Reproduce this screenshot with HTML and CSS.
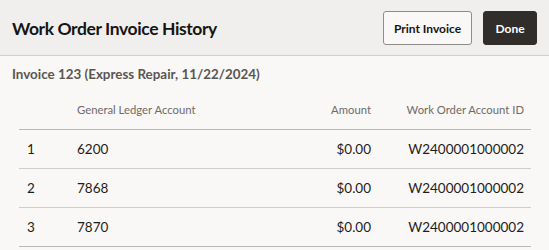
FILE: index.html
```html
<!DOCTYPE html>
<html>
<head>
<meta charset="utf-8">
<link rel="stylesheet" href="styles.css">
</head>
<body>
<div class="dialog">
  <header class="head">
    <h1 class="title">Work Order Invoice History</h1>
    <div class="actions">
      <button class="btn btn-outline">Print Invoice</button>
      <button class="btn btn-solid">Done</button>
    </div>
  </header>
  <main class="content">
    <h2 class="subtitle">Invoice 123 (Express Repair, 11/22/2024)</h2>
    <table class="grid">
      <colgroup>
        <col class="c-num"><col class="c-gl"><col class="c-amt"><col class="c-id">
      </colgroup>
      <thead>
        <tr>
          <th></th>
          <th class="left">General Ledger Account</th>
          <th class="right">Amount</th>
          <th class="right">Work Order Account ID</th>
        </tr>
      </thead>
      <tbody>
        <tr><td>1</td><td>6200</td><td class="right">$0.00</td><td class="right">W2400001000002</td></tr>
        <tr><td>2</td><td>7868</td><td class="right">$0.00</td><td class="right">W2400001000002</td></tr>
        <tr><td>3</td><td>7870</td><td class="right">$0.00</td><td class="right">W2400001000002</td></tr>
      </tbody>
    </table>
  </main>
</div>
</body>
</html>
```
FILE: styles.css
```css
* { box-sizing: border-box; }
html, body { margin: 0; padding: 0; }
body {
  width: 549px;
  height: 250px;
  overflow: hidden;
  background: #f9f8f6;
  font-family: Lato, "Liberation Sans", sans-serif;
  color: #161513;
}
.head {
  height: 56px;
  background: #f1efed;
  border-bottom: 1px solid #d2d0cd;
  display: flex;
  align-items: center;
  justify-content: space-between;
  padding: 0 12px 0 12px;
}
.title {
  margin: 0;
  font-size: 17.5px;
  font-weight: 700;
  letter-spacing: -0.4px;
  color: #161513;
  padding-top: 1px;
}
.actions {
  display: flex;
  gap: 11px;
  padding-top: 1px;
}
.btn {
  height: 34px;
  border-radius: 3px;
  font-family: inherit;
  font-size: 12px;
  font-weight: 700;
  padding: 0;
}
.btn-outline {
  width: 89px;
  background: #f9f8f6;
  border: 1px solid #8f8c88;
  color: #161513;
}
.btn-solid {
  width: 54px;
  background: #312d2a;
  border: 1px solid #312d2a;
  color: #ffffff;
}
.content {
  padding: 9px 18px 0 12px;
}
.subtitle {
  margin: 0;
  height: 18px;
  line-height: 18px;
  font-size: 13.4px;
  font-weight: 700;
  color: #5b5652;
}
.grid {
  margin-left: 7px;
  margin-top: 8px;
  width: 512px;
  border-collapse: collapse;
  table-layout: fixed;
}
.c-num { width: 50px; }
.c-gl { width: 221px; }
.c-amt { width: 89px; }
.c-id { width: 152px; }
th {
  height: 38px;
  font-size: 11.3px;
  font-weight: 400;
  color: #6f6b67;
  padding: 0 8px;
  vertical-align: middle;
  border-bottom: 1px solid #bcb9b6;
}
td {
  height: 39px;
  font-size: 13.5px;
  color: #1f1c1a;
  padding: 0 8px;
  vertical-align: middle;
  border-bottom: 1px solid #cfccc9;
}
tbody tr:last-child td { border-bottom-color: #bcb9b6; }
th.right, td.right { text-align: right; }
th.left { text-align: left; }
td:last-child, th:last-child { padding-right: 7px; }
```
